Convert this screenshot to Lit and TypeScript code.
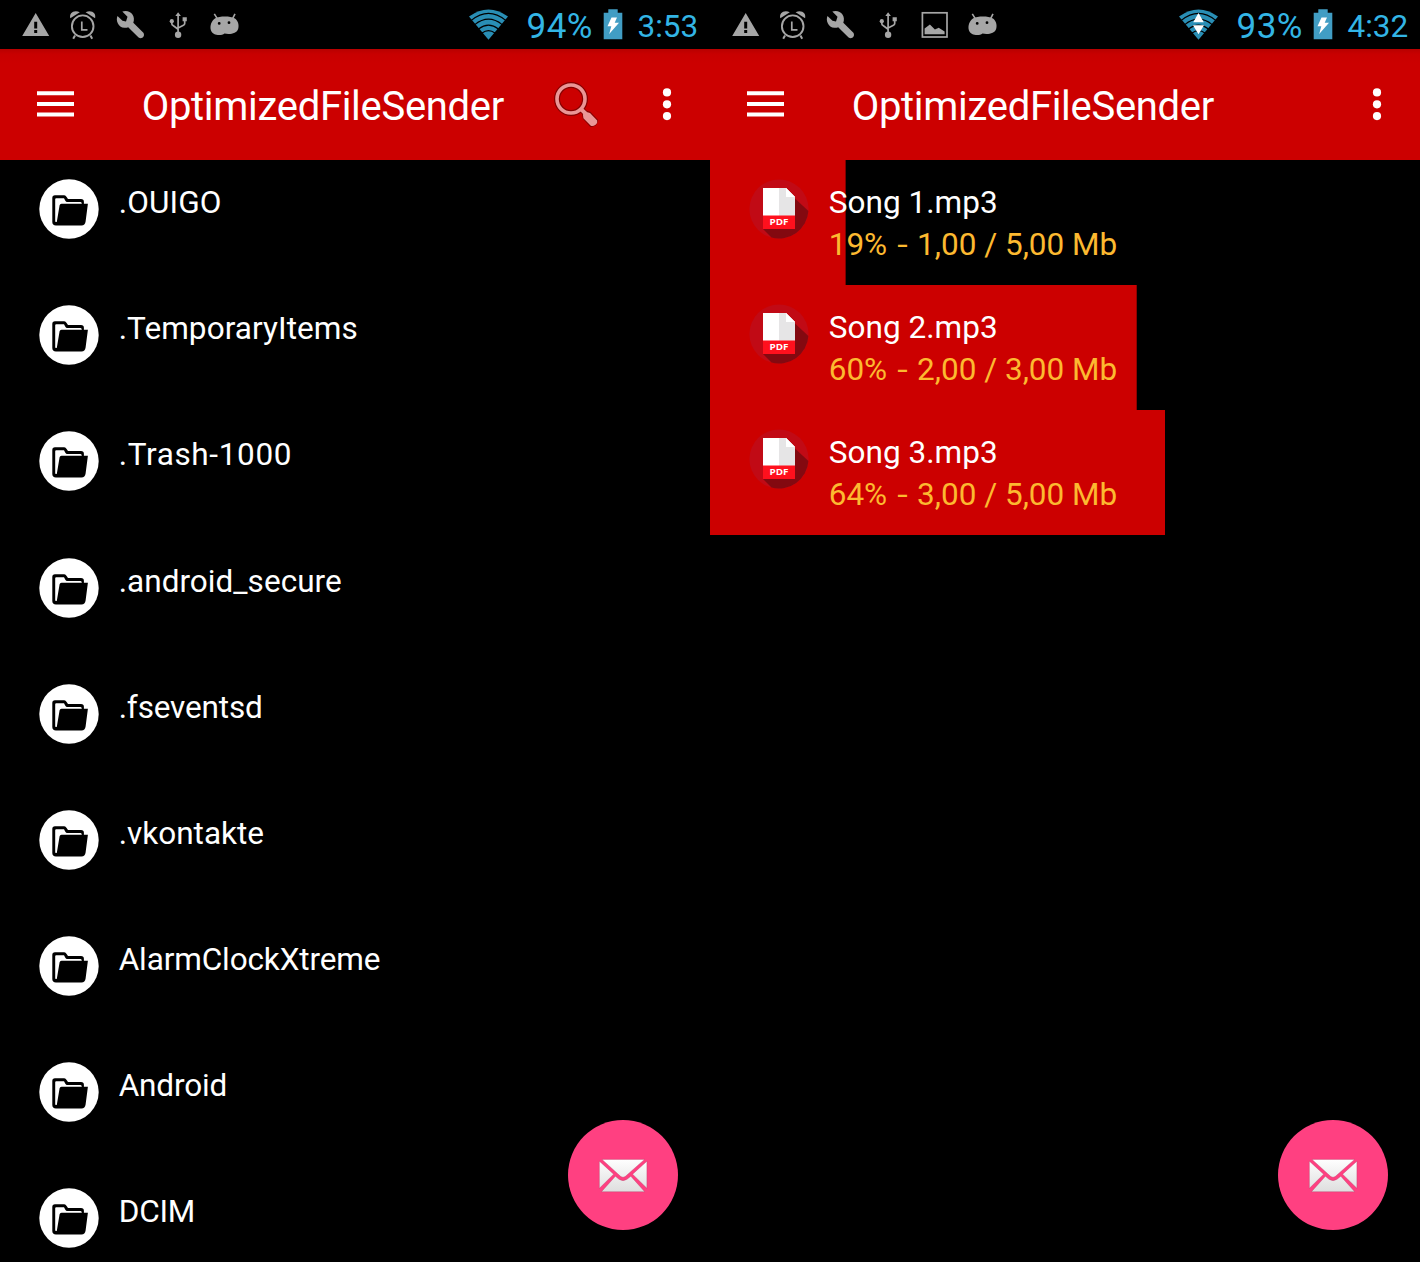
import { LitElement, html, svg, css, nothing } from "lit";
import { customElement, property } from "lit/decorators.js";

const icons = {
  warning: svg`<path fill-rule="evenodd" d="M23.7 13 37.2 36H10.2ZM22.2 21.8V28.6H25.2V21.8ZM22.2 30V33H25.2V30Z"/>`,
  alarm: svg`<g fill="none" stroke="#a6a6a6"><circle cx="23.7" cy="26.2" r="10.8" stroke-width="1.9"/><path d="M22.8 21.5V29.8H28.5" stroke-width="1.7"/><path d="M16 35.5 14.2 38.8M31.4 35.5 33.2 38.8" stroke-width="2"/></g><path d="M11.3 18.2C10 13.5 14.5 9.5 20.8 12.2ZM36.1 18.2C37.4 13.5 32.9 9.5 26.6 12.2Z"/>`,
  wrench: svg`<path d="M15.3 11.6 20.5 16.8 19 21.5 15.5 20.8 10.5 15.9C8.5 20 11 27.5 17.5 27.8 19 27.9 20.3 27.5 21.2 27.2L31.6 37.5C34.5 39.8 38.6 36.5 36.4 32.8L26.3 22.7C29.1 15.5 22.5 9 15.3 11.6Z"/>`,
  usb: svg`<g fill="none" stroke="#a6a6a6" stroke-width="1.7"><path d="M24.1 15V34M17.8 21V23.6Q17.8 25 19.1 25.6L24.1 29.2M30.7 20V23.5Q30.7 24.8 29.4 25.3L24.1 28"/></g><circle cx="24.1" cy="34.8" r="3.2"/><circle cx="17.8" cy="21.2" r="2.1"/><path d="M28.6 17.2H32.8V21.2H28.6ZM24.1 12.2 26.9 16H21.3Z"/>`,
  image: svg`<rect x="11.4" y="12.8" width="24.6" height="24.2" fill="none" stroke="#a6a6a6" stroke-width="1.7"/><path d="M13.6 34.2V28.5L18.9 24.5 23.9 29.5 27.7 27.8 33.6 31.5V34.2Z"/>`,
  android: svg`<path d="M13.3 13.8 16.3 18.6M34 13.8 31.6 18.6" stroke="#a6a6a6" stroke-width="1.6"/><path fill-rule="evenodd" d="M14.3 18.3C18 16 29 15.7 33.5 18.2 37 20 38.3 25 37.2 28.7 36 33.5 29 34.8 23.5 33.6 20 36.3 11.5 35.5 10 30.5 8.5 26 10.5 20.5 14.3 18.3ZM18.2 22A1.4 1.4 0 1 0 18.2 24.8 1.4 1.4 0 1 0 18.2 22ZM28 21.3A1.4 1.4 0 1 0 28 24.1 1.4 1.4 0 1 0 28 21.3Z"/>`,
};
type IconName = keyof typeof icons;

@customElement("status-bar")
class StatusBar extends LitElement {
  @property({ attribute: false }) items: IconName[] = [];
  @property() battery = "";
  @property() time = "";
  @property({ type: Boolean }) transferring = false;
  static styles = css`
    :host { display: flex; height: 49px; background: #000; color: #33b5e5; padding-left: 12px; font-family: Roboto, sans-serif; }
    .item { width: 47.33px; height: 49px; fill: #a6a6a6; flex: none; }
    .right { margin-left: auto; display: flex; }
    .wifi { width: 40px; height: 49px; margin-right: 18px; }
    .battery { width: 66px; margin-right: 10px; font-size: 35px; line-height: 53px; white-space: nowrap; letter-spacing: 0.5px; }
    .cell { width: 20px; height: 49px; margin-right: 15px; }
    .time { width: 72.5px; font-size: 31.5px; line-height: 53px; white-space: nowrap; }
  `;
  render() {
    return html`
      ${this.items.map((n) => html`<svg class="item" viewBox="0 0 47.33 49">${icons[n]}</svg>`)}
      <div class="right">
        <svg class="wifi" viewBox="0 0 40 49">
          <path d="M0 16.6Q19.5 2.6 39 16.6L19.5 39.7Z" fill="#298eb5"/>
          <g fill="none" stroke="#000" stroke-width="1.2" transform="translate(-.5 0)">
            <path d="M2.8 20.4Q20 6.4 37.2 20.4M6.3 24.6Q20 13.8 33.7 24.6M10 28.9Q20 21.2 30 28.9M13.5 33.1Q20 28.3 26.5 33.1"/>
          </g>
          ${this.transferring ? svg`<path d="M19.5 13 24.8 22.3H14.2ZM14 25.3H25L19.5 34.3Z" fill="#fff"/>` : nothing}
        </svg>
        <span class="battery">${this.battery}</span>
        <svg class="cell" viewBox="0 0 20 49">
          <path d="M0.7 12.7H5.3V9.3H14.7V12.7H19.3V39.3H0.7Z" fill="#419dc4"/>
          <path d="M8.5 17.5H14L11.7 22.7H16L6.2 34 8.3 26.3H4.5Z" fill="#fff"/>
        </svg>
        <span class="time">${this.time}</span>
      </div>`;
  }
}

@customElement("app-bar")
class AppBar extends LitElement {
  @property({ type: Boolean }) searchable = false;
  static styles = css`
    :host { display: flex; height: 110.6px; background: linear-gradient(#b80000 0, #c80000 5px, #cc0000 14px); color: #fff; font-family: Roboto, sans-serif; align-items: center; padding-left: 36.7px; box-sizing: border-box; }
    .menu { width: 37px; height: 27px; fill: #fff; margin-right: 68px; flex: none; }
    .title { font-size: 40px; line-height: 48px; padding-top: 5px; white-space: nowrap; flex: 1; letter-spacing: -0.3px; }
    .search { width: 48px; height: 48px; margin-right: 61px; flex: none; }
    .more { width: 10px; height: 34px; margin-right: 38.3px; fill: #fff; flex: none; }
  `;
  render() {
    return html`
      <svg class="menu" viewBox="0 0 37 27"><path d="M0 0.2H37V4.2H0ZM0 10.9H37V14.9H0ZM0 21.6H37V25.6H0Z"/></svg>
      <div class="title">OptimizedFileSender</div>
      ${this.searchable
        ? html`<svg class="search" viewBox="0 0 48 48">
            <g transform="translate(0 1)">
              <g fill="none" stroke="#850000" stroke-linecap="round"><circle cx="18" cy="18" r="14" stroke-width="6"/><path d="M28 28 31 31" stroke-width="6"/></g>
              <path d="M30.5 33 33 31.3 36.5 32 43.6 39.6 42 43.2 38 44.5 31.2 37Z" fill="#850000" stroke="#850000" stroke-width="3" stroke-linejoin="round"/>
              <g fill="none" stroke="#ea9696"><circle cx="18" cy="18" r="14" stroke-width="3.6"/><path d="M27.8 27.8 32.5 32.5" stroke-width="4"/></g>
              <path d="M29.9 33.4 32.8 30.7 37 32 44.2 39.6Q44.8 42 42.6 43.7 40 45.8 37.8 44.8L30.4 37.2Z" fill="#ea9696"/>
            </g>
          </svg>`
        : nothing}
      <svg class="more" viewBox="0 0 10 34"><circle cx="5" cy="5.4" r="4.1"/><circle cx="5" cy="17.3" r="4.1"/><circle cx="5" cy="29.1" r="4.1"/></svg>`;
  }
}

@customElement("mail-button")
class MailButton extends LitElement {
  static styles = css`
    :host { display: block; width: 110px; height: 110px; }
    .fab { display: block; width: 110px; height: 110px; }
  `;
  render() {
    return html`<svg class="fab" viewBox="0 0 110 110">
      <defs><linearGradient id="paper" x1="0" y1="39" x2="0" y2="72" gradientUnits="userSpaceOnUse"><stop offset="0" stop-color="#fff"/><stop offset="1" stop-color="#dedede"/></linearGradient></defs>
      <circle cx="55" cy="55" r="55" fill="#ff4081"/>
      <g fill="url(#paper)" stroke="#a33a61" stroke-opacity=".45" stroke-width=".7">
        <path d="M34 39.4H76.5L57.5 56.3Q55 58.3 52.5 56.3Z"/>
        <path d="M31.4 41.2 45.6 54.2 31.4 68.3Z"/>
        <path d="M78.9 41.2 64.6 54.2 78.9 68.3Z"/>
        <path d="M33.5 71.7 47.4 56.3 51 59.3Q55 62 59 59.3L62.8 56.3 76.7 71.7Z"/>
      </g>
    </svg>`;
  }
}

interface Folder { name: string; tracking?: number; }
interface Transfer { name: string; percent: string; amount: string; progress: number; }

@customElement("app-root")
class AppRoot extends LitElement {
  folders: Folder[] = [
    { name: ".OUIGO", tracking: 0.15 },
    { name: ".TemporaryItems", tracking: 0.07 },
    { name: ".Trash-1000", tracking: 0.65 },
    { name: ".android_secure", tracking: 0.04 },
    { name: ".fseventsd", tracking: -0.15 },
    { name: ".vkontakte" },
    { name: "AlarmClockXtreme", tracking: -0.12 },
    { name: "Android", tracking: -0.15 },
    { name: "DCIM", tracking: -0.2 },
  ];
  transfers: Transfer[] = [
    { name: "Song 1.mp3", percent: "19%", amount: "1,00 / 5,00 Mb", progress: 19.1 },
    { name: "Song 2.mp3", percent: "60%", amount: "2,00 / 3,00 Mb", progress: 60.1 },
    { name: "Song 3.mp3", percent: "64%", amount: "3,00 / 5,00 Mb", progress: 64.1 },
  ];
  static styles = css`
    :host { display: grid; grid-template-columns: 710px 710px; height: 1262px; overflow: hidden; background: #000; color: #fff; font-family: Roboto, sans-serif; }
    .screen { position: relative; height: 1262px; overflow: hidden; }
    .row { display: flex; box-sizing: border-box; height: 126.2px; padding: 19.4px 0 0 39px; }
    .transfer { height: 125px; background: linear-gradient(#cc0000, #cc0000) no-repeat left top; }
    .icon { width: 60px; height: 60px; flex: none; margin-right: 19.7px; }
    .text { display: flex; flex-direction: column; font-size: 31.5px; line-height: 43px; padding-top: 2px; white-space: nowrap; }
    .transfer .text { line-height: 42px; padding-top: 3px; letter-spacing: 0.05px; }
    .detail { color: #fcb930; letter-spacing: 0; padding-top: 0.3px; }
    .dash { display: inline-block; transform: scaleX(1.2); margin: 0 2.6px 0 2.9px; }
    .pdf { font: 700 9px/1 "Open Sans", sans-serif; fill: #fff; }
    .float { position: absolute; left: 568px; top: 1120px; }
  `;
  render() {
    return html`
      <section class="screen">
        <status-bar .items=${["warning", "alarm", "wrench", "usb", "android"]} battery="94%" time="3:53"></status-bar>
        <app-bar searchable></app-bar>
        ${this.folders.map((f) => html`<div class="row">
          <svg class="icon" viewBox="0 0 60 60"><circle cx="30" cy="30" r="29.7" fill="#fff"/>
            <path fill-rule="evenodd" d="M13.3 19Q13.3 16.3 16 16.3H25.3Q26.7 16.3 27.6 18L29 20H42Q44.9 20 44.9 22.7V24.7H48.9L46.6 42.5Q46 46.4 42.5 46.4H17Q13.3 46.4 13.3 43ZM16.2 20.2V42.8L17.8 43 20.6 26.2Q20.9 24.7 22.5 24.7H42.8Q42.8 22.9 41.5 22.9H28.2Q27 22.9 26.2 21.4L25 19.2H17.2Q16.2 19.2 16.2 20.2Z" fill="#000"/>
          </svg>
          <div class="text"><span style="letter-spacing:${f.tracking ?? 0}px">${f.name}</span></div>
        </div>`)}
        <mail-button class="float"></mail-button>
      </section>
      <section class="screen">
        <status-bar .items=${["warning", "alarm", "wrench", "usb", "image", "android"]} battery="93%" time="4:32" transferring></status-bar>
        <app-bar></app-bar>
        ${this.transfers.map((t) => html`<div class="row transfer" style="background-size:${t.progress}% 100%">
          <svg class="icon" viewBox="0 0 60 60"><circle cx="30" cy="30" r="29.6" fill="#c10a15"/>
            <path d="M46 19.5 59.4 32A29.6 29.6 0 0 1 22.5 58.6L14 50Z" fill="#830910"/>
            <path d="M14 9H37L46 18V37H14Z" fill="#fff"/><path d="M30 9H37L46 18V37H30Z" fill="#e6e5e6"/><path d="M37 9 46 18H37Z" fill="#fff"/>
            <path d="M14 36.5H46V50H14Z" fill="#ff101d"/>
            <text class="pdf" x="30" y="46.4" text-anchor="middle" textLength="19" lengthAdjust="spacingAndGlyphs">PDF</text>
          </svg>
          <div class="text"><span>${t.name}</span><span class="detail">${t.percent} <span class="dash">-</span> ${t.amount}</span></div>
        </div>`)}
        <mail-button class="float"></mail-button>
      </section>`;
  }
}
